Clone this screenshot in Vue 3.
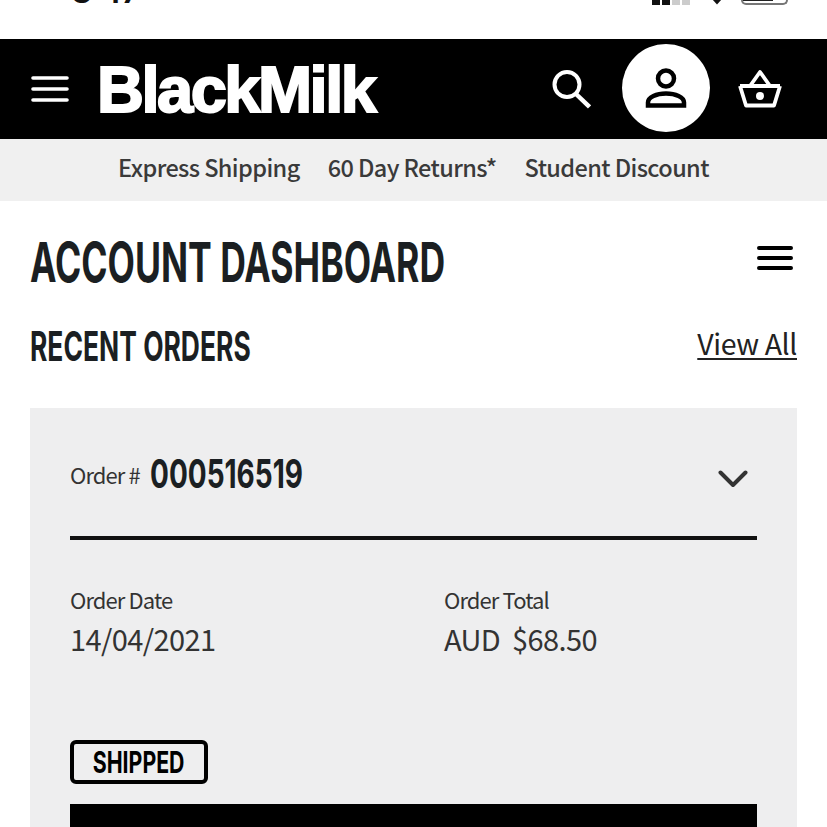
<template>
  <div class="page">
    <div class="status">
      <span class="time">8:47</span>
      <div class="status-icons">
        <div class="signal">
          <i v-for="bar in signalBars" :key="bar.id" :class="{ off: bar.off }"></i>
        </div>
        <svg class="wifi" width="16" height="6" viewBox="0 0 16 6">
          <path d="M3 0h10L8 5.500z" fill="#111" />
        </svg>
        <div class="battery"><span></span></div>
      </div>
    </div>

    <header class="topbar">
      <button class="icon-btn menu-btn" aria-label="Menu">
        <svg width="38" height="28" viewBox="0 0 38 28" fill="none" stroke="#fff" stroke-width="3.600" stroke-linecap="round">
          <path d="M2 3h34M2 14h34M2 25h34" />
        </svg>
      </button>
      <div class="logo">BlackMilk</div>
      <div class="top-actions">
        <svg class="search" width="40" height="40" viewBox="0 0 40 40" fill="none" stroke="#fff" stroke-width="4">
          <circle cx="16" cy="15.500" r="12.500" />
          <path d="M25 25l13.500 13" stroke-width="4.500" />
        </svg>
        <div class="account">
          <svg width="42" height="40" viewBox="0 0 42 40" fill="none" stroke="#000" stroke-width="4.500">
            <circle cx="21" cy="10.500" r="8" />
            <path d="M3 37.500v-3c0-5.500 8.500-9 18-9s18 3.500 18 9v3z" />
          </svg>
        </div>
        <svg class="basket" width="44" height="38" viewBox="0 0 44 38" fill="none" stroke="#fff" stroke-width="3.800" stroke-linejoin="round">
          <path d="M2 16h40M2 16l6 19.500h28L42 16M12 16L22 2l10 14" />
          <circle cx="22" cy="26" r="4" fill="#fff" stroke="none" />
        </svg>
      </div>
    </header>

    <nav class="usp">
      <span v-for="item in usps" :key="item">{{ item }}</span>
    </nav>

    <main class="content">
      <div class="title-row">
        <h1><span class="narrow">ACCOUNT DASHBOARD</span></h1>
        <svg class="page-menu" width="38" height="26" viewBox="0 0 38 26" fill="none" stroke="#000" stroke-width="4" stroke-linecap="round">
          <path d="M3 3h32M3 13h32M3 23h32" />
        </svg>
      </div>

      <div class="orders-head">
        <h2><span class="narrow">RECENT ORDERS</span></h2>
        <a href="#" class="view-all">View All</a>
      </div>

      <section class="order-card">
        <div class="order-top">
          <div class="order-no">
            <span class="order-label">Order #</span>
            <span class="order-num"><span class="narrow">{{ order.number }}</span></span>
          </div>
          <svg class="chevron" width="30" height="18" viewBox="0 0 30 18" fill="none" stroke="#333" stroke-width="4" stroke-linecap="round" stroke-linejoin="round">
            <path d="M2.500 2.500L15 15 27.500 2.500" />
          </svg>
        </div>

        <div class="order-meta">
          <div>
            <div class="meta-label">Order Date</div>
            <div class="meta-value">{{ order.date }}</div>
          </div>
          <div>
            <div class="meta-label">Order Total</div>
            <div class="meta-value">{{ order.total }}</div>
          </div>
        </div>

        <div class="badge"><span class="narrow-badge">SHIPPED</span></div>
        <div class="track-btn"></div>
      </section>
    </main>
  </div>
</template>

<script setup>
const usps = ['Express Shipping', '60 Day Returns*', 'Student Discount']

const signalBars = [
  { id: 1, off: false },
  { id: 2, off: false },
  { id: 3, off: true },
  { id: 4, off: true }
]

const order = {
  number: '000516519',
  date: '14/04/2021',
  total: 'AUD\u00a0\u00a0$68.50'
}
</script>

<style>
html,
body {
  margin: 0;
  background: #fff;
}
</style>

<style scoped>
.page {
  width: 827px;
  height: 827px;
  overflow: hidden;
  background: #fff;
  font-family: "Noto Sans CJK SC", "Noto Sans", sans-serif;
  color: #222;
}

.status {
  height: 39px;
  display: flex;
  justify-content: space-between;
  padding: 0 39px 0 72px;
  overflow: hidden;
}

.time {
  font-family: "Inter", sans-serif;
  font-weight: 700;
  font-size: 30px;
  line-height: 30px;
  margin-top: -23px;
  color: #111;
}

.status-icons {
  display: flex;
  align-items: flex-start;
  gap: 16px;
  margin-top: -1px;
}

.signal {
  display: flex;
  gap: 2px;
  margin-right: 3px;
}

.signal i {
  width: 8px;
  height: 6px;
  background: #111;
}

.signal i.off {
  background: #ccc;
}

.battery {
  width: 40px;
  height: 4px;
  border: 2px solid #777;
  border-top: 0;
  border-radius: 0 0 5px 5px;
  padding-right: 3px;
}

.battery span {
  display: block;
  width: 30px;
  height: 2px;
  background: #222;
}

.topbar {
  height: 100px;
  background: #000;
  display: flex;
  align-items: center;
  padding-left: 31px;
}

.icon-btn {
  border: 0;
  padding: 0;
  background: none;
  display: flex;
}

.logo {
  margin-left: 28px;
  font-family: "Liberation Sans", sans-serif;
  font-weight: 700;
  font-size: 65px;
  letter-spacing: -2.500px;
  line-height: 1;
  color: #fff;
  -webkit-text-stroke: 2px #fff;
}

.top-actions {
  margin-left: auto;
  display: flex;
  align-items: center;
  padding-right: 45px;
}

.search {
  margin-right: 31px;
}

.account {
  width: 88px;
  height: 88px;
  margin-top: -2px;
  border-radius: 50%;
  background: #fff;
  display: flex;
  align-items: center;
  justify-content: center;
}

.basket {
  margin-left: 28px;
}

.usp {
  height: 55px;
  padding-bottom: 7px;
  background: #f0f0f0;
  display: flex;
  justify-content: center;
  align-items: center;
  gap: 28px;
  font-size: 23.500px;
  font-weight: 500;
  color: #3a3a3a;
  letter-spacing: -0.6px;
}

.content {
  padding: 0 30px;
}

.title-row {
  display: flex;
  justify-content: space-between;
  align-items: center;
  height: 122px;
  padding-right: 3px;
}

.page-menu {
  margin-top: -8px;
}

h1,
h2,
.order-num,
.badge {
  font-family: "Inter", sans-serif;
  font-weight: 700;
  margin: 0;
  color: #1b1f22;
}

.narrow {
  display: inline-block;
  white-space: nowrap;
  transform-origin: left center;
}

h1 {
  font-size: 55px;
  line-height: 1;
}

h1 .narrow {
  transform: scaleX(0.646);
}

h2 {
  font-size: 41px;
  line-height: 1;
}

h2 .narrow {
  transform: scaleX(0.645);
}

.orders-head {
  display: flex;
  justify-content: space-between;
  align-items: center;
  height: 46px;
}

.view-all {
  font-size: 28.500px;
  margin-top: -8px;
  color: #222;
  letter-spacing: -0.4px;
  text-decoration: underline;
  text-underline-offset: 3px;
  text-decoration-thickness: 2px;
}

.order-card {
  margin-top: 39px;
  background: #eeeeef;
  padding: 0 40px;
  height: 500px;
}

.order-top {
  height: 128px;
  border-bottom: 4px solid #111;
  display: flex;
  justify-content: space-between;
  align-items: center;
  padding-right: 9px;
}

.chevron {
  margin-top: 14px;
}

.order-no {
  display: flex;
  align-items: center;
  gap: 10px;
  margin-top: 4px;
}

.order-label {
  font-size: 22px;
  letter-spacing: -0.9px;
  color: #333;
}

.order-num {
  font-size: 40px;
  line-height: 1;
}

.order-num .narrow {
  transform: scaleX(0.7);
}

.order-meta {
  display: grid;
  grid-template-columns: 374px 1fr;
  margin-top: 41px;
}

.meta-label {
  font-size: 22px;
  line-height: 36px;
  letter-spacing: -0.9px;
  color: #333;
}

.meta-value {
  font-size: 29px;
  line-height: 42px;
  letter-spacing: -0.6px;
  color: #333;
}

.badge {
  margin-top: 81px;
  width: 138px;
  height: 44px;
  box-sizing: border-box;
  border: 4px solid #000;
  border-radius: 6px;
  display: flex;
  align-items: center;
  justify-content: center;
  font-size: 30px;
  background: #eeeeef;
  color: #000;
  white-space: nowrap;
}

.narrow-badge {
  display: inline-block;
  transform: scaleX(0.71);
}

.track-btn {
  margin-top: 20px;
  height: 60px;
  background: #000;
}
</style>
